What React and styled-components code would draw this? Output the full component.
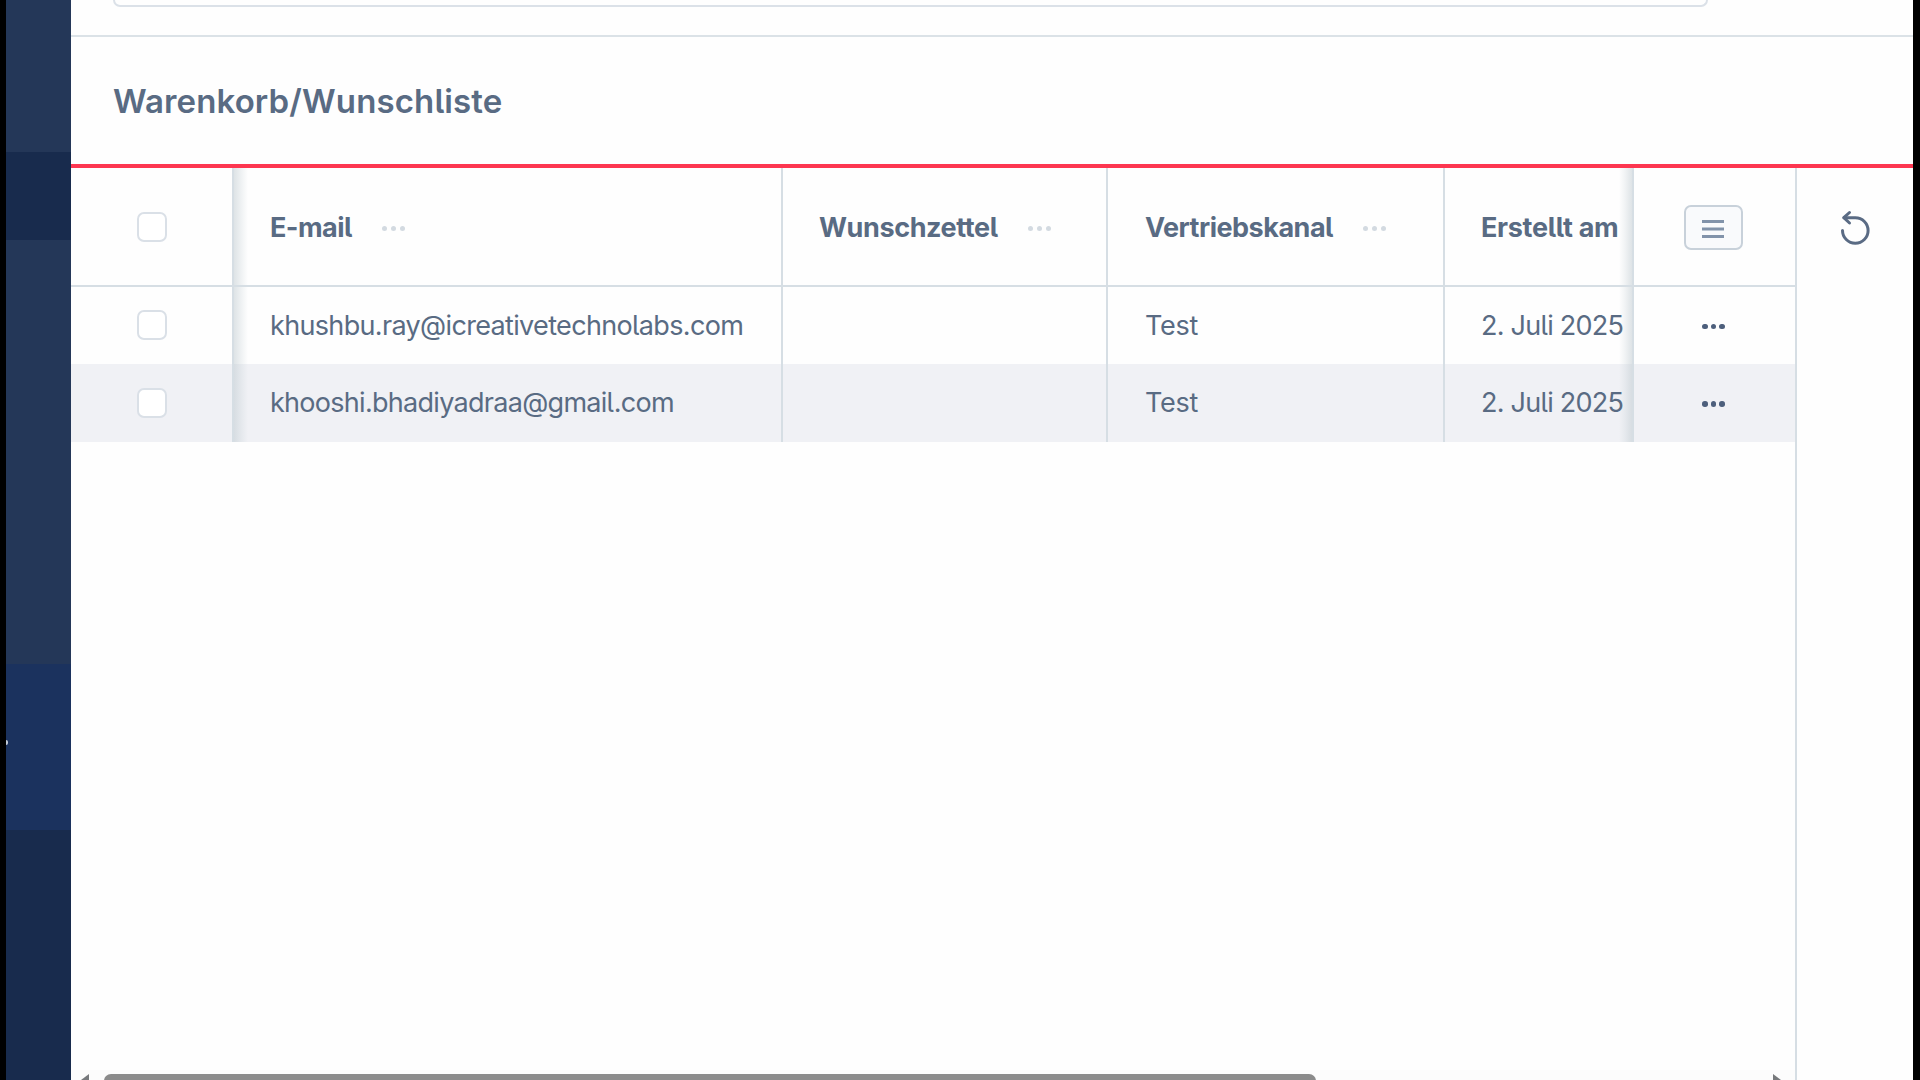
import React from "react";
import styled, { createGlobalStyle } from "styled-components";

const Global = createGlobalStyle`
  * { box-sizing: border-box; }
  html, body { margin: 0; padding: 0; background: #000; overflow: hidden; }
  body {
    font-family: Inter, "Liberation Sans", sans-serif;
    font-feature-settings: "cv05" 1;
    color: #596b83;
  }
  h1 { margin: 0; }
`;

const Screen = styled.div`
  display: flex;
  width: 1920px;
  height: 1080px;
  padding: 0 7px 0 6px;
  background: #000;
  overflow: hidden;
`;

const Sidebar = styled.nav`
  flex: 0 0 65px;
  display: flex;
  flex-direction: column;
`;

const SidebarBlock = styled.div`
  height: ${(p) => p.$height}px;
  background: ${(p) => p.$color};
  display: flex;
  align-items: flex-start;
`;

const SidebarDot = styled.span`
  width: 2px;
  height: 5px;
  margin-top: 76px;
  border-radius: 0 3px 3px 0;
  background: #c2ccd9;
`;

const Main = styled.main`
  flex: 1;
  min-width: 0;
  display: flex;
  flex-direction: column;
  background: #fefefe;
`;

const FormArea = styled.section`
  height: 37px;
  padding: 0 205px 0 42px;
  border-bottom: 2px solid #dbe2e7;
`;

const Field = styled.div`
  height: 7px;
  border: 2px solid #dbe1e8;
  border-top: 0;
  border-radius: 0 0 7px 7px;
`;

const TitleBar = styled.header`
  height: 131px;
  padding: 44px 0 0 42px;
  border-bottom: 4px solid #fd3650;
`;

const Title = styled.h1`
  font-size: 33px;
  line-height: 40px;
  font-weight: 600;
  letter-spacing: 0.12px;
  white-space: nowrap;
`;

const Content = styled.section`
  flex: 1;
  min-height: 0;
  display: flex;
`;

const GridPanel = styled.div`
  width: 1726px;
  border-right: 2px solid #d6dee4;
  display: flex;
  flex-direction: column;
`;

const Row = styled.div`
  display: grid;
  grid-template-columns: 163px 549px 325px 337px 189px 161px;
  height: ${(p) => p.$height}px;
  background: ${(p) => (p.$striped ? "#f0f1f5" : "#fefefe")};
  border-bottom: ${(p) => (p.$head ? "2px solid #d6dee4" : "0")};
`;

const Cell = styled.div`
  display: flex;
  align-items: center;
  justify-content: ${(p) => (p.$center ? "center" : "flex-start")};
  padding-top: ${(p) => (p.$head ? 2 : 0)}px;
  padding-left: ${(p) => (p.$center ? 0 : p.$inset || 36)}px;
  padding-right: ${(p) => (p.$last ? 2 : 0)}px;
  border-right: ${(p) => (p.$last ? "0" : "2px solid #d6dee4")};
  white-space: nowrap;
  min-width: 0;
  background: ${(p) =>
    p.$shade === "left"
      ? "linear-gradient(to right, rgba(190,201,207,.5), rgba(200,210,215,.25) 8px, transparent 14px)"
      : p.$shade === "right"
        ? "linear-gradient(to left, rgba(190,201,207,.5), rgba(200,210,215,.25) 7px, transparent 13px)"
        : "none"};
`;

const Label = styled.span`
  font-size: 27px;
  line-height: 34px;
  font-weight: ${(p) => (p.$bold ? 700 : 400)};
  letter-spacing: ${(p) => p.$spacing || 0}px;
`;

const Checkbox = styled.span`
  width: 30px;
  height: 30px;
  margin-bottom: 1px;
  border: 2px solid #dae0e7;
  border-radius: 7px;
  background: #fff;
`;

const DotGroup = styled.span`
  display: flex;
  gap: ${(p) => (p.$light ? 4 : 3)}px;
  margin-left: ${(p) => (p.$light ? 30 : 0)}px;
  margin-top: 2px;
`;

const Dot = styled.i`
  width: ${(p) => (p.$light ? 5 : 5.6)}px;
  height: ${(p) => (p.$light ? 5 : 5.6)}px;
  border-radius: 50%;
  background: ${(p) => (p.$light ? "#d3dae1" : "#4d5f7c")};
`;

const ListButton = styled.button`
  width: 59px;
  height: 45px;
  padding: 2px 1px 0 0;
  border: 2px solid #c8d1da;
  border-radius: 7px;
  background: #f9fafc;
  display: flex;
  align-items: center;
  justify-content: center;
`;

const BodySpace = styled.div`
  flex: 1;
`;

const Scrollbar = styled.div`
  height: 10px;
  background: #fcfcfc;
  overflow: hidden;
  display: flex;
  align-items: flex-start;
  padding: 4px 14px 0 10px;
`;

const Thumb = styled.div`
  width: 1212px;
  height: 14px;
  margin: 0 auto 0 15px;
  border-radius: 7px;
  background: #8b8b8b;
`;

const ArrowIcon = styled.svg`
  flex: none;
  display: block;
`;

const Tools = styled.aside`
  flex: 1;
  display: flex;
  justify-content: center;
  padding-top: 42px;
`;

const Dots = ({ light }) => (
  <DotGroup $light={light}>
    <Dot $light={light} />
    <Dot $light={light} />
    <Dot $light={light} />
  </DotGroup>
);

const columns = [
  { name: "E-mail", spacing: -0.55, shade: "left", menu: true },
  { name: "Wunschzettel", spacing: -0.4, menu: true },
  { name: "Vertriebskanal", spacing: -0.5, menu: true, inset: 37 },
  { name: "Erstellt am", spacing: -0.3, shade: "right" },
];

const rows = [
  { email: "khushbu.ray@icreativetechnolabs.com", spacing: -0.66, height: 77 },
  { email: "khooshi.bhadiyadraa@gmail.com", spacing: -0.71, height: 78 },
];

export default function App() {
  return (
    <>
      <Global />
      <Screen>
        <Sidebar>
          <SidebarBlock $height={152} $color="#243758" />
          <SidebarBlock $height={88} $color="#182b4d" />
          <SidebarBlock $height={424} $color="#243758" />
          <SidebarBlock $height={166} $color="#1b325e">
            <SidebarDot />
          </SidebarBlock>
          <SidebarBlock $height={250} $color="#182b4d" />
        </Sidebar>
        <Main>
          <FormArea>
            <Field />
          </FormArea>
          <TitleBar>
            <Title>Warenkorb/Wunschliste</Title>
          </TitleBar>
          <Content>
            <GridPanel>
              <Row $height={119} $head>
                <Cell $center $head>
                  <Checkbox />
                </Cell>
                {columns.map((c) => (
                  <Cell key={c.name} $head $shade={c.shade} $inset={c.inset}>
                    <Label $bold $spacing={c.spacing}>{c.name}</Label>
                    {c.menu && <Dots light />}
                  </Cell>
                ))}
                <Cell $center $last $head>
                  <ListButton>
                    <svg width="22" height="20" viewBox="0 0 22 20" fill="none" stroke="#8293aa" strokeWidth="3.2">
                      <path d="M0 2.5H22M0 10H22M0 17.5H22" />
                    </svg>
                  </ListButton>
                </Cell>
              </Row>
              {rows.map((r, i) => (
                <Row key={r.email} $height={r.height} $striped={i === 1}>
                  <Cell $center>
                    <Checkbox />
                  </Cell>
                  <Cell $shade="left">
                    <Label $spacing={r.spacing}>{r.email}</Label>
                  </Cell>
                  <Cell />
                  <Cell $inset={37}>
                    <Label $spacing={-0.3}>Test</Label>
                  </Cell>
                  <Cell $shade="right">
                    <Label $spacing={-0.75}>2. Juli 2025</Label>
                  </Cell>
                  <Cell $center $last>
                    <Dots />
                  </Cell>
                </Row>
              ))}
              <BodySpace />
              <Scrollbar>
                <ArrowIcon width="8" height="12" viewBox="0 0 8 12">
                  <path d="M8 0V12L0 6Z" fill="#77797c" />
                </ArrowIcon>
                <Thumb />
                <ArrowIcon width="8" height="12" viewBox="0 0 8 12">
                  <path d="M0 0V12L8 6Z" fill="#77797c" />
                </ArrowIcon>
              </Scrollbar>
            </GridPanel>
            <Tools>
              <svg width="32" height="36" viewBox="0 0 32 36" fill="none" stroke="#5a6b84" strokeWidth="3" strokeLinecap="round" strokeLinejoin="round">
                <path d="M3.5 20.5A12.8 12.8 0 1 0 16.3 7.7H5" />
                <path d="M10.5 2.5L4.8 7.7L10.5 13" />
              </svg>
            </Tools>
          </Content>
        </Main>
      </Screen>
    </>
  );
}
